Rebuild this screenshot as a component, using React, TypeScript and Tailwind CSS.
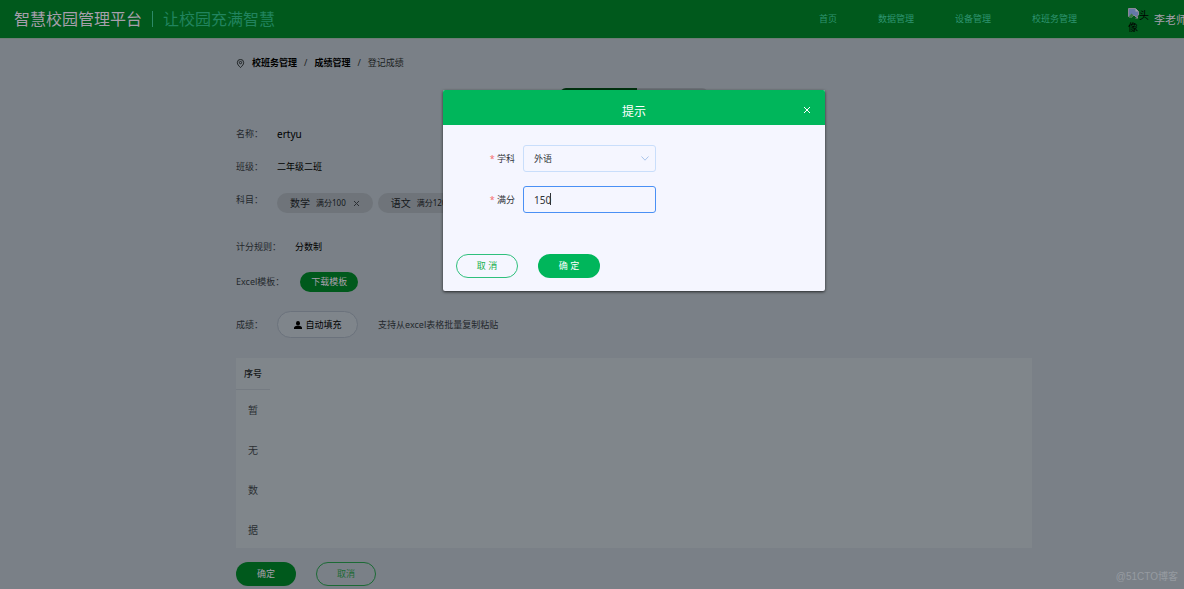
import { useState, type ReactNode } from "react";
import { clsx } from "clsx";

const navLinks = ["首页", "数据管理", "设备管理", "校班务管理"];

const subjects = [
  { name: "数学", full: 100 },
  { name: "语文", full: 120 },
];

type RowProps = {
  label: string;
  className?: string;
  children: ReactNode;
};

function Row({ label, className, children }: RowProps) {
  return (
    <div className={clsx("flex gap-3.5", className)}>
      <span className="text-[#24282c]">{label}：</span>
      {children}
    </div>
  );
}

function BrokenImage() {
  return (
    <svg viewBox="0 0 11 11" className="inline-block size-[11px] align-baseline">
      <path d="M0.5 0.5h7l3 3v3.5l-2.500 2-2-2-2.500 2.500-3-1z" fill="#6478a8" stroke="#8b8794" />
      <path d="M7.500 0.500v3h3z" fill="#a3a3ad" />
      <path d="M1 8.500l2.500-3 2 2-2 2.500H1z" fill="#397843" />
      <path d="M7 10.500l3-2.500v2.500z" fill="#8b8794" />
    </svg>
  );
}

function Header() {
  return (
    <header className="flex h-[39px] items-center border-b border-[#6d7d76] bg-[#00591c] pr-[81px] pl-3.5">
      <h1 className="text-base leading-6 text-[#a79fac]">智慧校园管理平台</h1>
      <span className="mx-2.5 h-4 w-px bg-[#2d8a68]" />
      <p className="text-base leading-6 text-[#21845f]">让校园充满智慧</p>
      <nav className="ml-auto flex gap-[41px] text-[#2f9470]">
        {navLinks.map((link) => (
          <a key={link} href="#">
            {link}
          </a>
        ))}
      </nav>
      <span className="ml-[51px] w-[22px] pt-0.5 text-[10px] leading-3 text-black">
        <BrokenImage />头像
      </span>
      <span className="ml-1 pt-0.5 text-[11px] text-[#a79fac]">李老师</span>
    </header>
  );
}

function Breadcrumb() {
  return (
    <div className="flex h-12 items-center gap-[7px] text-[#1c1f22]">
      <svg viewBox="0 0 10 10" className="size-[9px]" fill="none" stroke="#15181a">
        <path d="M5 9.500C3 7.500 1.500 6 1.500 4a3.500 3.500 0 0 1 7 0c0 2-1.500 3.500-3.500 5.500z" />
        <circle cx="5" cy="4" r="1.300" />
      </svg>
      <a href="#" className="font-bold text-black">
        校班务管理
      </a>
      <span>/</span>
      <a href="#" className="font-bold text-black">
        成绩管理
      </a>
      <span>/</span>
      <span>登记成绩</span>
    </div>
  );
}

function Dialog() {
  const [subject, setSubject] = useState("外语");
  const [full, setFull] = useState("150");

  return (
    <div className="absolute inset-x-0 top-[90px] flex justify-center">
      <div
        role="dialog"
        aria-labelledby="dialog-title"
        className="w-[382px] rounded-xs bg-[#f5f6ff] shadow-[0_1px_3px_rgba(0,0,0,0.7)]"
      >
        <div className="relative flex h-[35px] items-center justify-center rounded-t-xs bg-[#00b65b] pt-2 text-white">
          <h2 id="dialog-title" className="text-xs">
            提示
          </h2>
          <button aria-label="关闭" className="absolute top-4 right-3.5">
            <svg viewBox="0 0 8 8" className="size-[8px]" fill="none" stroke="white">
              <path d="M1 1l6 6M7 1l-6 6" />
            </svg>
          </button>
        </div>
        <form className="px-[13px] pt-5 pb-[13px] text-[#2f3338]" onSubmit={(e) => e.preventDefault()}>
          <div className="flex items-center gap-2">
            <label htmlFor="subject" className="w-[59px] text-right">
              <span className="text-[#f56c6c]">* </span>学科
            </label>
            <div className="relative w-[133px]">
              <select
                id="subject"
                value={subject}
                onChange={(e) => setSubject(e.target.value)}
                className="h-[27px] w-full appearance-none rounded-[3px] border border-[#c9defb] px-2.5"
              >
                <option>外语</option>
                <option>数学</option>
                <option>语文</option>
              </select>
              <svg
                viewBox="0 0 8 5"
                className="pointer-events-none absolute top-[11px] right-[7px] h-[5px] w-[8px]"
                fill="none"
                stroke="#a9c4ea"
              >
                <path d="M0.500 0.500L4 4.200l3.500-3.700" />
              </svg>
            </div>
          </div>
          <div className="mt-3.5 flex items-center gap-2">
            <label htmlFor="full" className="w-[59px] text-right">
              <span className="text-[#f56c6c]">* </span>满分
            </label>
            <div className="relative w-[133px]">
              <input
                id="full"
                value={full}
                onChange={(e) => setFull(e.target.value)}
                className="h-[27px] w-full rounded-[3px] border border-[#4a90f5] px-2.5 text-[10px]"
              />
              <span className="absolute top-[7px] left-[27px] h-3 w-px bg-[#2f3338]" />
            </div>
          </div>
          <div className="mt-[41px] flex gap-5">
            <button className="h-6 w-[62px] rounded-full border border-[#2fc07c] text-[#20b04c]">
              取 消
            </button>
            <button className="h-6 w-[62px] rounded-full bg-[#00b65b] text-white">确 定</button>
          </div>
        </form>
      </div>
    </div>
  );
}

export default function App() {
  return (
    <div className="relative min-h-screen overflow-hidden bg-[#7a8087] font-['Noto_Sans','Noto_Sans_CJK_SC',sans-serif] text-[9px] leading-4">
      <div className="relative min-w-[1268px]">
        <Header />
        <main className="mx-auto max-w-[796px] text-black">
          <Breadcrumb />
          <div className="mt-px flex justify-center">
            <button aria-label="按科目登记" className="h-5 w-[77px] rounded-l-md bg-[#00330f]" />
            <button aria-label="按班级登记" className="h-5 w-[71px] rounded-r-md bg-[#6c7177]" />
          </div>

          <Row label="名称" className="mt-[9px] h-[33px] items-center">
            <span className="text-[10px]">ertyu</span>
          </Row>
          <Row label="班级" className="h-[33px] items-center">
            <span>二年级二班</span>
          </Row>
          <Row label="科目" className="h-[47px] pt-[9px]">
            <ul className="mt-px flex gap-[5px]">
              {subjects.map((s) => (
                <li
                  key={s.name}
                  className="flex h-5 items-center rounded-full bg-[#6f747a] px-[13px] text-[#15181a]"
                >
                  <span className="text-[10px]">{s.name}</span>
                  <span className="ml-1.5 text-[8px]">满分{s.full}</span>
                  <button aria-label={`删除${s.name}`} className="ml-[7px]">
                    <svg viewBox="0 0 7 7" className="size-[7px]" fill="none" stroke="#2b2f33">
                      <path d="M1 1l5 5M6 1l-5 5" />
                    </svg>
                  </button>
                </li>
              ))}
            </ul>
          </Row>
          <Row label="计分规则" className="h-[33px] items-center">
            <span>分数制</span>
          </Row>
          <Row label="Excel模板" className="h-[38px] items-center">
            <button className="ml-0.5 h-5 rounded-full bg-[#00591c] px-[11px] text-[#a79fac]">
              下载模板
            </button>
          </Row>
          <Row label="成绩" className="h-[47px] items-center">
            <button className="flex h-[27px] w-[81px] items-center justify-center gap-1 rounded-full border border-[#6b727c] bg-[#7f858b]">
              <svg viewBox="0 0 8 8" className="size-[8px]">
                <ellipse cx="4" cy="2.300" rx="2" ry="2.300" />
                <path d="M0 8V6.700c0-1 1.500-1.500 2.800-1.900h2.400C6.500 5.200 8 5.700 8 6.700V8z" />
              </svg>
              自动填充
            </button>
            <span className="ml-1.5 text-[#24282c]">支持从excel表格批量复制粘贴</span>
          </Row>

          <div className="mt-2.5 h-[190px] bg-[#80868b]">
            <table className="w-[34px] table-fixed text-center">
              <thead>
                <tr>
                  <th className="h-[31px] border-b border-[#757b82] pt-0.5 font-medium text-[#15181a]">
                    序号
                  </th>
                </tr>
              </thead>
              <tbody>
                <tr>
                  <td className="px-3 text-[10px] leading-10 break-all text-[#2b2f33]">暂无数据</td>
                </tr>
              </tbody>
            </table>
          </div>

          <div className="mt-3.5 flex gap-5">
            <button className="h-6 w-[60px] rounded-full bg-[#00591c] text-[#a79fac]">确定</button>
            <button className="h-6 w-[60px] rounded-full border border-[#1c6a35] text-[#1c6a35]">
              取消
            </button>
          </div>
        </main>
        <Dialog />
      </div>
      <span className="absolute right-1.5 bottom-1 font-['Liberation_Sans','Noto_Sans_CJK_SC',sans-serif] text-[10px] text-[#969ba1]">
        @51CTO博客
      </span>
    </div>
  );
}
